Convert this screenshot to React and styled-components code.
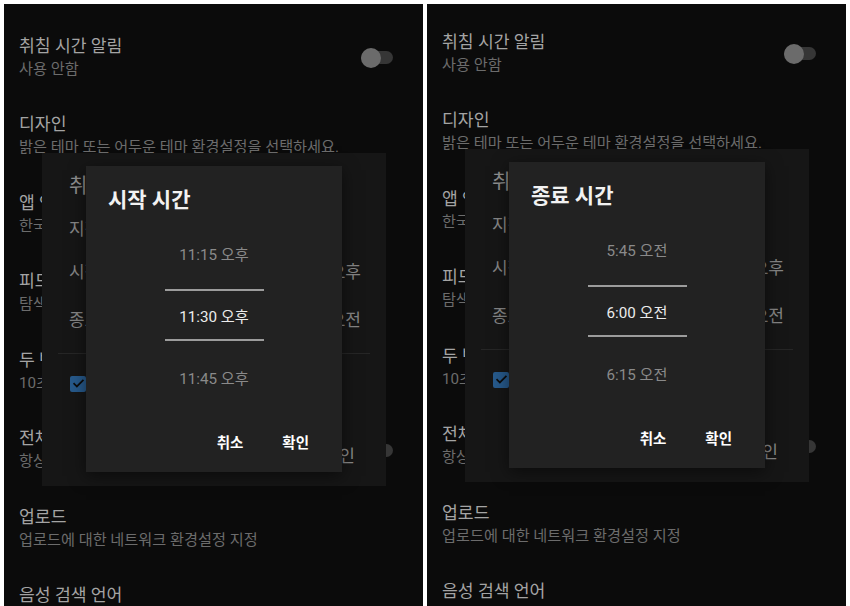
import React from "react";
import styled, { createGlobalStyle } from "styled-components";

const Global = createGlobalStyle`
  html, body { margin: 0; padding: 0; background: #ffffff; }
  * { box-sizing: border-box; }
`;

const Page = styled.div`
  display: flex;
  gap: 4px;
  padding: 4px 4px 0;
  height: 606px;
  width: 850px;
  background: #ffffff;
  overflow: hidden;
`;

const Phone = styled.div`
  position: relative;
  flex: 1;
  overflow: hidden;
  background: #0b0b0b;
  font-family: Roboto, "Noto Sans CJK KR", sans-serif;
`;

const SettingsList = styled.div`
  display: flex;
  flex-direction: column;
  padding-top: ${(p) => 14.5 - p.$shift}px;
`;

const SettingRow = styled.div`
  display: flex;
  align-items: center;
  justify-content: space-between;
  height: 78.5px;
  padding: 0 30px 0 15px;
`;

const RowText = styled.div`
  display: flex;
  flex-direction: column;
  min-height: 46px;
`;

const RowTitle = styled.div`
  font-size: 17.2px;
  line-height: 23px;
  color: #a4a4a4;
  white-space: nowrap;
`;

const RowSub = styled.div`
  font-size: 15.2px;
  line-height: 23px;
  color: #6c6c6c;
  white-space: nowrap;
`;

const Switch = styled.div`
  position: relative;
  width: 32px;
  height: 13px;
  border-radius: 7px;
  background: #363636;
  &::before {
    content: "";
    position: absolute;
    left: 0;
    top: -3.5px;
    width: 20px;
    height: 20px;
    border-radius: 50%;
    background: #6b6b6b;
  }
`;

const OuterDialog = styled.div`
  position: absolute;
  left: 38px;
  top: ${(p) => 149 - p.$shift}px;
  width: 344px;
  height: 333px;
  background: #161616;
  display: flex;
  flex-direction: column;
  padding: 20px 0 20px;
`;

const OuterTitle = styled.div`
  padding-left: 27px;
  font-size: 20px;
  line-height: 26px;
  color: #8e8e8e;
`;

const OuterRow = styled.div`
  display: flex;
  justify-content: space-between;
  padding: 0 25px 0 27px;
  margin-top: ${(p) => p.$mt}px;
  font-size: 17px;
  line-height: 24px;
  color: #858585;
  white-space: nowrap;
`;

const OuterDivider = styled.div`
  margin: 21px 16px 0;
  height: 1px;
  background: #262626;
`;

const CheckRow = styled.div`
  display: flex;
  align-items: center;
  gap: 14px;
  margin-top: 19px;
  padding-left: 28px;
  font-size: 15px;
  color: #858585;
`;

const CheckBox = styled.div`
  width: 16px;
  height: 16px;
  border-radius: 2px;
  background: #275a8c;
  display: flex;
  align-items: center;
  justify-content: center;
`;

const OuterButtons = styled.div`
  margin-top: auto;
  display: flex;
  justify-content: flex-end;
  gap: 34px;
  padding-right: 31px;
  height: 24px;
  align-items: center;
  font-size: 17px;
  color: #8a8a8a;
`;

const PickerDialog = styled.div`
  position: absolute;
  left: 82px;
  top: ${(p) => 162 - p.$shift}px;
  width: 256px;
  height: 306px;
  background: #222222;
  display: flex;
  flex-direction: column;
  padding: 20px 0 13px;
  box-shadow: 0 4px 16px rgba(0, 0, 0, 0.5);
`;

const PickerTitle = styled.div`
  padding-left: 22px;
  font-size: 21px;
  font-weight: 700;
  line-height: 28px;
  color: #f2f2f2;
`;

const Wheel = styled.div`
  margin-top: 8px;
  display: flex;
  flex-direction: column;
  align-items: center;
`;

const WheelItem = styled.div`
  display: flex;
  align-items: center;
  justify-content: center;
  height: ${(p) => (p.$selected ? 52 : 62)}px;
  width: ${(p) => (p.$selected ? 99 : 200)}px;
  margin: ${(p) => (p.$selected ? "5px 0" : "0")};
  border-top: ${(p) => (p.$selected ? "2px solid #9c9c9c" : "none")};
  border-bottom: ${(p) => (p.$selected ? "2px solid #9c9c9c" : "none")};
  font-size: 15.2px;
  color: ${(p) => (p.$selected ? "#ececec" : "#8a8a8a")};
  white-space: nowrap;
`;

const PickerButtons = styled.div`
  margin-top: auto;
  display: flex;
  justify-content: flex-end;
  align-items: center;
  gap: 39px;
  height: 36px;
  padding-right: 33px;
`;

const TextButton = styled.div`
  font-size: 14.5px;
  font-weight: 700;
  color: #ffffff;
`;

const settings = [
  { title: "취침 시간 알림", sub: "사용 안함", toggle: true },
  { title: "디자인", sub: "밝은 테마 또는 어두운 테마 환경설정을 선택하세요." },
  { title: "앱 언어", sub: "한국어" },
  { title: "피드 필터", sub: "탐색 피드에 표시할 항목 선택" },
  { title: "두 번 탭하여 탐색", sub: "10초" },
  { title: "전체 화면에서 알림", sub: "항상 표시", toggle: true },
  { title: "업로드", sub: "업로드에 대한 네트워크 환경설정 지정" },
  { title: "음성 검색 언어" },
];

function Check() {
  return (
    <svg width="13" height="13" viewBox="0 0 24 24" fill="none">
      <path d="M4 12.5l5 5L20 6.5" stroke="#0c0c0c" strokeWidth="3.2" strokeLinecap="square" />
    </svg>
  );
}

function PhoneScreen({ shift, title, items }) {
  return (
    <Phone>
      <SettingsList $shift={shift}>
        {settings.map((s) => (
          <SettingRow key={s.title}>
            <RowText>
              <RowTitle>{s.title}</RowTitle>
              {s.sub && <RowSub>{s.sub}</RowSub>}
            </RowText>
            {s.toggle && <Switch />}
          </SettingRow>
        ))}
      </SettingsList>
      <OuterDialog $shift={shift}>
        <OuterTitle>취침 시간 알림</OuterTitle>
        <OuterRow $mt={18}>
          <span>지정된 시간에 알림</span>
        </OuterRow>
        <OuterRow $mt={19}>
          <span>시작 시간</span>
          <span>11:30 오후</span>
        </OuterRow>
        <OuterRow $mt={24}>
          <span>종료 시간</span>
          <span>6:00 오전</span>
        </OuterRow>
        <OuterDivider />
        <CheckRow>
          <CheckBox>
            <Check />
          </CheckBox>
          <span>동영상 종료 후 알림</span>
        </CheckRow>
        <OuterButtons>
          <span>취소</span>
          <span>확인</span>
        </OuterButtons>
      </OuterDialog>
      <PickerDialog $shift={shift}>
        <PickerTitle>{title}</PickerTitle>
        <Wheel>
          <WheelItem>{items[0]}</WheelItem>
          <WheelItem $selected>{items[1]}</WheelItem>
          <WheelItem>{items[2]}</WheelItem>
        </Wheel>
        <PickerButtons>
          <TextButton>취소</TextButton>
          <TextButton>확인</TextButton>
        </PickerButtons>
      </PickerDialog>
    </Phone>
  );
}

export default function App() {
  return (
    <>
      <Global />
      <Page>
        <PhoneScreen shift={0} title="시작 시간" items={["11:15 오후", "11:30 오후", "11:45 오후"]} />
        <PhoneScreen shift={4} title="종료 시간" items={["5:45 오전", "6:00 오전", "6:15 오전"]} />
      </Page>
    </>
  );
}
